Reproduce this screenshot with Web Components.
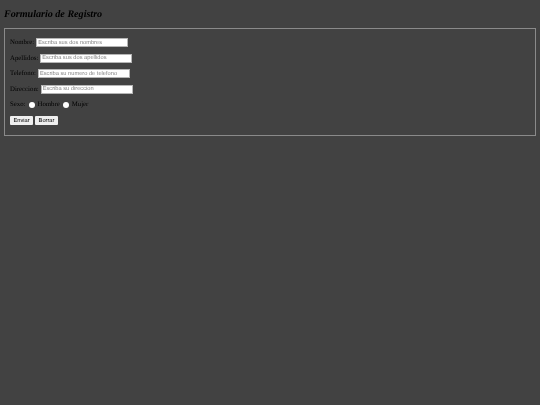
<!DOCTYPE html>
<html lang="es"><head><meta charset="utf-8"><title>Formulario de Registro</title>
<style>
html,body{margin:0;height:100%;background:#424242;}
body{padding:0 4px;box-sizing:border-box;font:6.8px/9px "Liberation Serif",serif;color:#000;text-rendering:geometricPrecision;}
</style></head><body>
<registro-form></registro-form>
<script>
class FormRow extends HTMLElement{
  constructor(){super();const s=this.attachShadow({mode:'open'});
  s.innerHTML=`<style>:host{display:flex;align-items:center;height:9.5px;gap:2px;margin-bottom:6px;white-space:nowrap}
  input{box-sizing:border-box;width:92px;height:9px;margin:0;padding:0 1px;border:.5px solid #b5b5b5;background:#fff;font:5.7px "Liberation Sans",sans-serif;text-rendering:geometricPrecision;color:#000;outline:0}
  input::placeholder{color:#858585;opacity:1}</style>
  <label><slot></slot></label><input type="text">`;
  s.querySelector('input').placeholder=this.getAttribute('placeholder')||'';}
}
customElements.define('form-row',FormRow);
class SexoRow extends HTMLElement{
  constructor(){super();this.attachShadow({mode:'open'}).innerHTML=`<style>:host{display:flex;align-items:center;height:9.5px;margin-bottom:6px;white-space:nowrap}
  input{appearance:none;box-sizing:border-box;width:6.4px;height:6.4px;margin:0 2.5px 0 3.1px;border:0;border-radius:50%;background:#fff}
  </style>
  <span>Sexo:</span><input type="radio" name="s"><span>Hombre</span><input type="radio" name="s"><span>Mujer</span>`;}
}
customElements.define('sexo-row',SexoRow);
class FormButtons extends HTMLElement{
  constructor(){super();this.attachShadow({mode:'open'}).innerHTML=`<style>:host{display:flex;gap:2px}
  button{box-sizing:border-box;width:23px;height:9px;padding:1px 0 0;margin:0;border:0;border-radius:1px;background:#efefef;color:#000;font:5.7px/8px "Liberation Sans",sans-serif;text-rendering:geometricPrecision}</style>
  <button type="submit">Enviar</button><button type="reset">Borrar</button>`;}
}
customElements.define('form-buttons',FormButtons);
class RegistroForm extends HTMLElement{
  constructor(){super();this.attachShadow({mode:'open'}).innerHTML=`<style>:host{display:block;filter:blur(.3px)}
  h1{margin:0;padding:8px 0 7px;font:italic bold 10.1px/13px "Liberation Serif",serif;color:#000}
  form{display:block;box-sizing:border-box;height:108px;margin:0;padding:9px 5px;border:1px solid #8a8a8a}</style>
  <h1>Formulario de Registro</h1>
  <form onsubmit="return false">
    <form-row placeholder="Escriba sus dos nombres">Nombre:</form-row>
    <form-row placeholder="Escriba sus dos apellidos">Apellidos:</form-row>
    <form-row placeholder="Escriba su numero de telefono">Telefono:</form-row>
    <form-row placeholder="Escriba su direccion">Direccion:</form-row>
    <sexo-row></sexo-row>
    <form-buttons></form-buttons>
  </form>`;}
}
customElements.define('registro-form',RegistroForm);
</script>
</body></html>
